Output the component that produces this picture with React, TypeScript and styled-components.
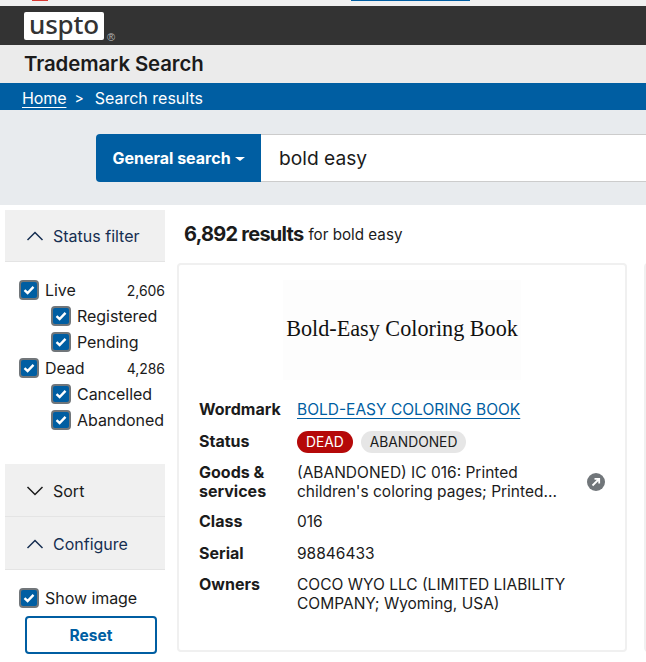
import styled, { createGlobalStyle } from "styled-components";

const GlobalStyle = createGlobalStyle`
  html, body {
    margin: 0;
    padding: 0;
    background: #fff;
    overflow: hidden;
  }
  body {
    font-family: "Inter", "Liberation Sans", sans-serif;
    color: #1b1b1b;
  }
`;

const Page = styled.div`
  width: 646px;
  height: 662px;
  overflow: hidden;
  display: flex;
  flex-direction: column;
`;

const ClippedBanner = styled.div`
  height: 6px;
  background: #f0f0f0;
  display: flex;
  align-items: flex-start;
  padding-left: 32px;
`;

const BannerFlag = styled.div`
  width: 16px;
  height: 1px;
  background: #d83933;
`;

const BannerLink = styled.div`
  width: 119px;
  height: 1px;
  margin-left: 303px;
  background: #005ea2;
`;

const LogoBar = styled.header`
  height: 39px;
  background: #333;
  padding: 6px 0 0 24px;
  box-sizing: border-box;
  display: flex;
  align-items: flex-start;
`;

const LogoBadge = styled.div`
  width: 80px;
  height: 28px;
  background: #fff;
  border-radius: 2px;
  color: #333;
  font-family: "Noto Sans", sans-serif;
  font-size: 26px;
  font-weight: 500;
  line-height: 24px;
  letter-spacing: -0.2px;
  text-align: center;
`;

const LogoMark = styled.span`
  font-family: "Liberation Sans", sans-serif;
  font-size: 11px;
  line-height: 11px;
  color: #b5b5b5;
  margin: 20px 0 0 3px;
`;

const TitleBar = styled.div`
  height: 38px;
  background: #ebebeb;
  padding-left: 24px;
  font-size: 20.4px;
  font-weight: 600;
  line-height: 38px;
  letter-spacing: -0.1px;
`;

const Breadcrumbs = styled.nav`
  height: 27px;
  box-sizing: border-box;
  padding: 2px 0 0 22px;
  background: #005ea2;
  color: #fff;
  display: flex;
  align-items: center;
  font-size: 16px;
`;

const CrumbLink = styled.a`
  color: #fff;
  text-decoration: underline;
  text-underline-offset: 3px;
  letter-spacing: -0.1px;
`;

const CrumbSeparator = styled.span`
  margin: 0 11px 0 8px;
  font-size: 14px;
`;

const SearchArea = styled.div`
  height: 95px;
  background: #e8ebee;
  padding: 24px 0 0 96px;
  box-sizing: border-box;
  display: flex;
  align-items: flex-start;
`;

const SearchType = styled.button`
  width: 165px;
  height: 48px;
  background: #005ea2;
  color: #fff;
  border: 0;
  border-radius: 4px 0 0 4px;
  font: 700 16px "Inter", sans-serif;
  padding: 0;
  display: flex;
  align-items: center;
  justify-content: center;
  gap: 4px;
`;

const Caret = styled.span`
  width: 0;
  height: 0;
  margin-top: 2px;
  border-left: 5px solid transparent;
  border-right: 5px solid transparent;
  border-top: 4px solid #fff;
`;

const SearchInput = styled.div`
  flex: 1;
  height: 48px;
  box-sizing: border-box;
  background: #fff;
  border-top: 1px solid #ccc;
  border-bottom: 1px solid #ccc;
  padding-left: 18px;
  font-size: 19.2px;
  line-height: 46px;
`;

const Content = styled.div`
  flex: 1;
  display: flex;
  padding: 5px 0 0 5px;
`;

const Sidebar = styled.aside`
  width: 160px;
  flex-shrink: 0;
`;

const AccordionHead = styled.div<{ $open?: boolean; $tall?: boolean }>`
  height: ${(p) => (p.$tall ? 53 : 52)}px;
  box-sizing: border-box;
  background: #f0f0f0;
  border-bottom: 1px solid #e4e4e4;
  padding: ${(p) => (p.$tall ? 1 : 0)}px 0 0 21px;
  display: flex;
  align-items: center;
  gap: 9px;
  font-size: 16px;
  color: ${(p) => (p.$open ? "#162e51" : "#1b1b1b")};
`;

const CheckList = styled.div`
  padding-top: 15px;
  height: 202px;
  box-sizing: border-box;
`;

const ConfigureList = styled(CheckList)`
  height: auto;
`;

const CheckRow = styled.div<{ $nested?: boolean }>`
  height: 26px;
  padding-left: ${(p) => (p.$nested ? 46 : 14)}px;
  display: flex;
  align-items: center;
  gap: 6px;
  font-size: 16px;
  letter-spacing: -0.05px;
`;

const CheckBox = styled.span`
  width: 20px;
  height: 20px;
  box-sizing: border-box;
  flex-shrink: 0;
  background: #005ea2;
  border: 2px solid #71767a;
  border-radius: 4px;
  display: flex;
  align-items: center;
  justify-content: center;
`;

const Count = styled.span`
  margin-left: auto;
  font-size: 14px;
`;

const ResetButton = styled.button`
  display: block;
  width: 132px;
  height: 38px;
  margin: 5px 0 0 20px;
  background: #fff;
  border: 2px solid #005ea2;
  border-radius: 4px;
  color: #005ea2;
  font: 700 15.5px "Inter", sans-serif;
`;

const Results = styled.main`
  flex: 1;
  min-width: 0;
  padding-left: 13px;
  overflow: hidden;
`;

const ResultsHeading = styled.div`
  height: 48px;
  margin-bottom: 5px;
  padding-left: 6px;
  display: flex;
  align-items: center;
  gap: 5px;
  font-size: 15.2px;
`;

const ResultsCount = styled.strong`
  font-size: 20px;
  font-weight: 700;
  letter-spacing: -0.75px;
`;

const CardRow = styled.div`
  display: flex;
  gap: 17px;
  margin-left: -1px;
`;

const Card = styled.section`
  width: 450px;
  height: 389px;
  flex-shrink: 0;
  box-sizing: border-box;
  border: 2px solid #f0f0f0;
  border-radius: 4px;
  padding: 15px 20px 0;
`;

const MarkImage = styled.div`
  height: 100px;
  width: 238px;
  margin: 0 auto 14px;
  background: #fdfdfd;
  text-align: center;
  font-family: "Liberation Serif", serif;
  font-size: 22.2px;
  line-height: 98px;
  color: #111;
  white-space: nowrap;
`;

const Fields = styled.div`
  display: grid;
  grid-template-columns: 98px 1fr;
  grid-template-rows: 32px 31px 49px 32px 31px auto;
  font-size: 15.5px;
  line-height: 19px;
`;

const FieldLabel = styled.div`
  font-size: 16px;
  font-weight: 700;
  padding-top: 6px;
`;

const FieldValue = styled.div`
  padding-top: 6px;
  position: relative;
`;

const TagRow = styled.div`
  height: 19px;
  display: flex;
  align-items: center;
  gap: 8px;
`;

const MarkLink = styled.a`
  color: #005ea2;
  text-decoration: underline;
  text-underline-offset: 3px;
`;

const Tag = styled.span<{ $dead?: boolean }>`
  height: 22px;
  line-height: 22px;
  padding: 0 9px;
  border-radius: 11px;
  font-size: 13.8px;
  background: ${(p) => (p.$dead ? "#b50909" : "#e6e6e6")};
  color: ${(p) => (p.$dead ? "#fff" : "#1b1b1b")};
`;

const OpenBadge = styled.span`
  position: absolute;
  right: 0;
  top: 16px;
  width: 18px;
  height: 18px;
  border-radius: 50%;
  background: #71767a;
  display: flex;
  align-items: center;
  justify-content: center;
`;

const Chevron = ({ up }: { up?: boolean }) => (
  <svg width="18" height="10" viewBox="0 0 18 10" fill="none" stroke="currentColor" strokeWidth="1.5">
    <path d={up ? "M1.5 9 L9 1.5 L16.5 9" : "M1.5 1 L9 8.5 L16.5 1"} />
  </svg>
);

const Check = () => (
  <svg width="12" height="10" viewBox="0 0 12 10" fill="none" stroke="#fff" strokeWidth="2.4">
    <path d="M1.5 5.2 L4.6 8 L10.5 1.8" />
  </svg>
);

const Filter = ({ label, count, nested }: { label: string; count?: string; nested?: boolean }) => (
  <CheckRow $nested={nested}>
    <CheckBox>
      <Check />
    </CheckBox>
    {label}
    {count && <Count>{count}</Count>}
  </CheckRow>
);

export default function App() {
  return (
    <Page>
      <GlobalStyle />
      <ClippedBanner>
        <BannerFlag />
        <BannerLink />
      </ClippedBanner>
      <LogoBar>
        <LogoBadge>uspto</LogoBadge>
        <LogoMark>®</LogoMark>
      </LogoBar>
      <TitleBar>Trademark Search</TitleBar>
      <Breadcrumbs>
        <CrumbLink>Home</CrumbLink>
        <CrumbSeparator>&gt;</CrumbSeparator>
        Search results
      </Breadcrumbs>
      <SearchArea>
        <SearchType>
          General search
          <Caret />
        </SearchType>
        <SearchInput>bold easy</SearchInput>
      </SearchArea>
      <Content>
        <Sidebar>
          <AccordionHead $open>
            <Chevron up />
            Status filter
          </AccordionHead>
          <CheckList>
            <Filter label="Live" count="2,606" />
            <Filter label="Registered" nested />
            <Filter label="Pending" nested />
            <Filter label="Dead" count="4,286" />
            <Filter label="Cancelled" nested />
            <Filter label="Abandoned" nested />
          </CheckList>
          <AccordionHead $tall>
            <Chevron />
            Sort
          </AccordionHead>
          <AccordionHead $open $tall>
            <Chevron up />
            Configure
          </AccordionHead>
          <ConfigureList>
            <Filter label="Show image" />
            <ResetButton>Reset</ResetButton>
          </ConfigureList>
        </Sidebar>
        <Results>
          <ResultsHeading>
            <ResultsCount>6,892 results</ResultsCount>
            for bold easy
          </ResultsHeading>
          <CardRow>
            <Card>
              <MarkImage>Bold-Easy Coloring Book</MarkImage>
              <Fields>
                <FieldLabel>Wordmark</FieldLabel>
                <FieldValue>
                  <MarkLink>BOLD-EASY COLORING BOOK</MarkLink>
                </FieldValue>
                <FieldLabel>Status</FieldLabel>
                <FieldValue>
                  <TagRow>
                    <Tag $dead>DEAD</Tag>
                    <Tag>ABANDONED</Tag>
                  </TagRow>
                </FieldValue>
                <FieldLabel>
                  Goods &amp;
                  <br />
                  services
                </FieldLabel>
                <FieldValue>
                  (ABANDONED) IC 016: Printed
                  <br />
                  children's coloring pages; Printed...
                  <OpenBadge>
                    <svg width="10" height="10" viewBox="0 0 10 10" fill="none" stroke="#fff" strokeWidth="1.8">
                      <path d="M1.5 8.5 L8 2 M3.5 1.8 H8.2 V6.5" />
                    </svg>
                  </OpenBadge>
                </FieldValue>
                <FieldLabel>Class</FieldLabel>
                <FieldValue>016</FieldValue>
                <FieldLabel>Serial</FieldLabel>
                <FieldValue>98846433</FieldValue>
                <FieldLabel>Owners</FieldLabel>
                <FieldValue>
                  COCO WYO LLC (LIMITED LIABILITY
                  <br />
                  COMPANY; Wyoming, USA)
                </FieldValue>
              </Fields>
            </Card>
            <Card />
          </CardRow>
        </Results>
      </Content>
    </Page>
  );
}
